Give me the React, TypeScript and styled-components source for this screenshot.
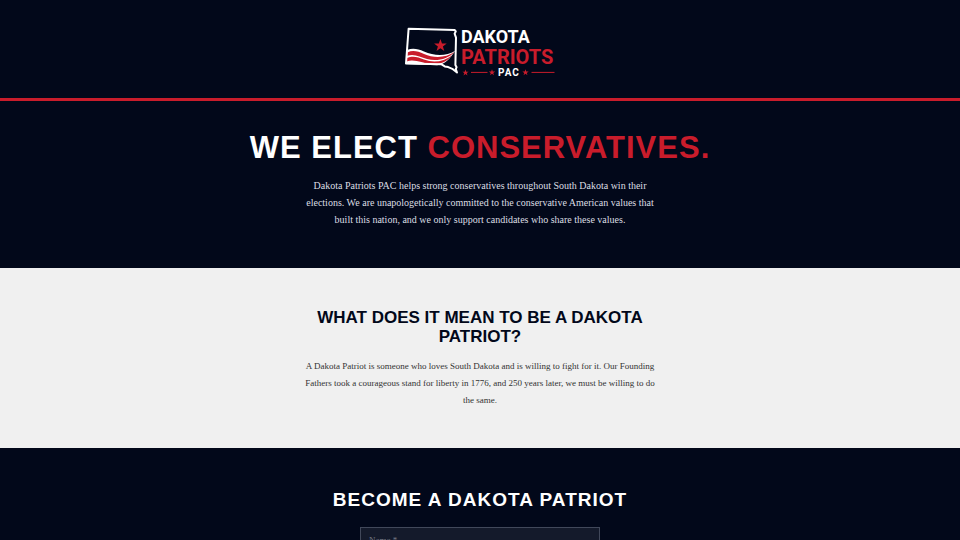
import React from "react";
import styled, { createGlobalStyle } from "styled-components";

const navy = "#02081a";
const red = "#c91c2b";
const heading = '"Liberation Sans", Arial, sans-serif';
const bodyFont = '"Liberation Serif", "Times New Roman", serif';

const GlobalStyle = createGlobalStyle`
  *, *::before, *::after { box-sizing: border-box; }
  body { margin: 0; background: ${navy}; font-family: ${bodyFont}; }
`;

const Header = styled.header`
  display: flex;
  justify-content: center;
  padding: 24px 16px 19px;
  border-bottom: 3px solid ${red};
`;

const LogoLink = styled.a`
  display: block;
  line-height: 0;
`;

const Section = styled.section<{ $light?: boolean }>`
  display: flex;
  flex-direction: column;
  align-items: center;
  padding: 40px 16px ${(p) => (p.$light ? "39px" : "40px")};
  text-align: center;
  background: ${(p) => (p.$light ? "#f0f0f0" : navy)};
  color: ${(p) => (p.$light ? "#333333" : "#dcdee3")};
`;

const Hero = styled(Section)`
  padding-top: 28px;
`;

const HeroTitle = styled.h1`
  margin: 0 0 10px;
  font: bold 31px/38px ${heading};
  letter-spacing: 1px;
  text-transform: uppercase;
  color: #ffffff;
`;

const Accent = styled.span`
  color: ${red};
`;

const Title = styled.h2<{ $dark?: boolean }>`
  margin: 0 0 ${(p) => (p.$dark ? "12px" : "15px")};
  max-width: 360px;
  font: bold ${(p) => (p.$dark ? "17px/19px" : "19px/24px")} ${heading};
  letter-spacing: ${(p) => (p.$dark ? "normal" : "1px")};
  text-transform: uppercase;
  color: ${(p) => (p.$dark ? navy : "#ffffff")};
`;

const Copy = styled.p<{ $small?: boolean }>`
  margin: 0;
  max-width: ${(p) => (p.$small ? "354px" : "360px")};
  font-size: ${(p) => (p.$small ? "9px" : "10px")};
  line-height: 17px;
`;

const Form = styled.form`
  width: 100%;
  max-width: 240px;
`;

const Field = styled.input`
  display: block;
  width: 100%;
  height: 25px;
  padding: 0 8px;
  border: 1px solid #41485a;
  border-radius: 0;
  background: #141a2b;
  color: #ffffff;
  font: 9px/15px ${bodyFont};
  &::placeholder { color: #747985; opacity: 1; }
`;

const LogoText = styled.text`
  font-family: Roboto, "Liberation Sans", sans-serif;
  font-weight: bold;
`;

const starPath =
  "M0-6.6 1.6-2.1 6.3-2.1 2.5.8 3.9 5.4 0 2.6-3.9 5.4-2.5.8-6.3-2.1-1.6-2.1Z";

function Logo() {
  return (
    <svg width="152" height="55" viewBox="404 24 152 55" role="img" aria-label="Dakota Patriots PAC">
      <path
        d="M407 50C413 47.8 418 49 424 51.6C434 56 446 56.6 455 51C450 58.5 445 64.6 437 65.2L405.8 64Z"
        fill="#ffffff"
      />
      <path d="M407.4 52.4C413 49.8 418 51.4 424 54C434 58.4 446 58 454.6 51.8C448 59.6 436 61.6 427 59C420 56.8 414 53.2 407.2 55.8Z" fill={red} />
      <path d="M406.8 58C413 55.4 418 57 424 59.6C434 63.2 444 61.4 452 55.4C446 63 437 65 430 64.2C423 63.4 415 58.8 406.6 61.4Z" fill={red} />
      <path
        d="M408.6 28.8 454.6 30 455.8 31.4 454.6 33.7 456 37.6 455.4 65 456.6 67.2 455.8 69 457 72.5 452.3 68.8 448.2 67.1 444.8 66.4 441.6 64.3 406 63.5Z"
        fill="none"
        stroke="#ffffff"
        strokeWidth="2"
        strokeLinejoin="round"
      />
      <path d={starPath} fill={red} transform="translate(440.4 45.7)" />
      <LogoText x="461" y="43" fontSize="18" fill="#ffffff">DAKOTA</LogoText>
      <LogoText x="461" y="64" fontSize="20" fill={red}>PATRIOTS</LogoText>
      <LogoText x="498" y="76" fontSize="10" letterSpacing="1" fill="#ffffff">PAC</LogoText>
      <path d={starPath} fill={red} transform="translate(465.5 72.7) scale(.5)" />
      <path d={starPath} fill={red} transform="translate(492 72.5) scale(.5)" />
      <path d={starPath} fill={red} transform="translate(525.5 72.5) scale(.5)" />
      <path d="M471 72.4H487.5M531.5 72.4H554.5" stroke={red} strokeWidth="1" />
    </svg>
  );
}

export default function App() {
  return (
    <>
      <GlobalStyle />
      <Header>
        <LogoLink href="#" aria-label="Dakota Patriots PAC home">
          <Logo />
        </LogoLink>
      </Header>
      <main>
        <Hero>
          <HeroTitle>
            We Elect <Accent>Conservatives.</Accent>
          </HeroTitle>
          <Copy>
            Dakota Patriots PAC helps strong conservatives throughout South Dakota win their
            elections. We are unapologetically committed to the conservative American values that
            built this nation, and we only support candidates who share these values.
          </Copy>
        </Hero>
        <Section $light>
          <Title $dark>What does it mean to be a Dakota Patriot?</Title>
          <Copy $small>
            A Dakota Patriot is someone who loves South Dakota and is willing to fight for it. Our
            Founding Fathers took a courageous stand for liberty in 1776, and 250 years later, we
            must be willing to do the same.
          </Copy>
        </Section>
        <Section>
          <Title>Become a Dakota Patriot</Title>
          <Form>
            <Field type="text" name="name" placeholder="Name *" aria-label="Name" required />
          </Form>
        </Section>
      </main>
    </>
  );
}
